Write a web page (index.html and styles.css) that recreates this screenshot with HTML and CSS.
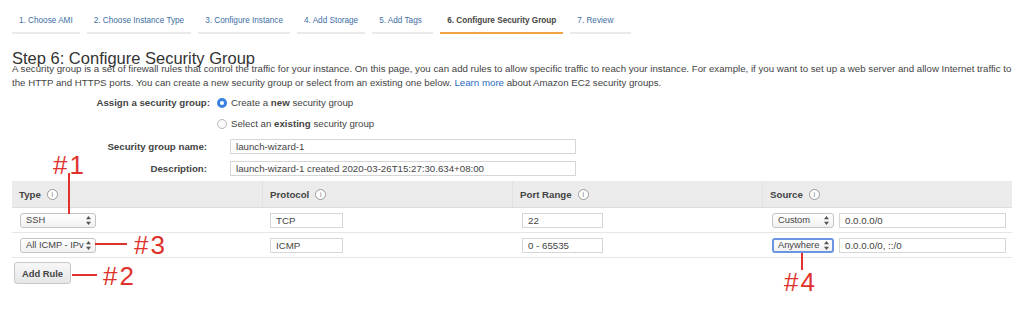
FILE: index.html
```html
<!DOCTYPE html>
<html>
<head>
  <meta charset="UTF-8" />
  <title>Step 6: Configure Security Group</title>
  <link rel="stylesheet" href="styles.css">
</head>
<body>
  <div class="page">
    <!-- wizard steps -->
    <div class="tabs">
      <div class="tab">1. Choose AMI</div>
      <div class="tab">2. Choose Instance Type</div>
      <div class="tab">3. Configure Instance</div>
      <div class="tab">4. Add Storage</div>
      <div class="tab">5. Add Tags</div>
      <div class="tab active">6. Configure Security Group</div>
      <div class="tab">7. Review</div>
    </div>

    <h1 class="title">Step 6: Configure Security Group</h1>
    <p class="intro">A security group is a set of firewall rules that control the traffic for your instance. On this page, you can add rules to allow specific traffic to reach your instance. For example, if you want to set up a web server and allow Internet traffic to the HTTP and HTTPS ports. You can create a new security group or select from an existing one below. <a href="#">Learn more</a> about Amazon EC2 security groups.</p>

    <div class="assign">
      <div class="assign-label">Assign a security group:</div>
      <div class="radio-line"><span class="radio checked"></span><span>Create a <b>new</b> security group</span></div>
      <div></div>
      <div class="radio-line"><span class="radio"></span><span>Select an <b>existing</b> security group</span></div>
    </div>

    <div class="fields">
      <label class="field-label">Security group name:</label>
      <div class="text-box">launch-wizard-1</div>
      <label class="field-label">Description:</label>
      <div class="text-box">launch-wizard-1 created 2020-03-26T15:27:30.634+08:00</div>
    </div>

    <div class="rules">
      <div class="rules-head">
        <div class="cell">Type <span class="info">i</span></div>
        <div class="cell">Protocol <span class="info">i</span></div>
        <div class="cell">Port Range <span class="info">i</span></div>
        <div class="cell">Source <span class="info">i</span></div>
      </div>
      <div class="rules-row">
        <div class="cell">
          <div class="select type-select"><span class="sel-text">SSH</span>
            <svg class="arrows" width="5" height="9" viewBox="0 0 5 9"><path d="M2.5 0 L5 3.3 L0 3.3 Z M2.5 9 L5 5.7 L0 5.7 Z" fill="#555"/></svg>
          </div>
        </div>
        <div class="cell"><div class="text-box proto">TCP</div></div>
        <div class="cell"><div class="text-box port">22</div></div>
        <div class="cell source">
          <div class="select source-select"><span class="sel-text">Custom</span>
            <svg class="arrows" width="5" height="9" viewBox="0 0 5 9"><path d="M2.5 0 L5 3.3 L0 3.3 Z M2.5 9 L5 5.7 L0 5.7 Z" fill="#555"/></svg>
          </div>
          <div class="text-box cidr">0.0.0.0/0</div>
        </div>
      </div>
      <div class="rules-row">
        <div class="cell">
          <div class="select type-select"><span class="sel-text">All ICMP - IPv</span>
            <svg class="arrows" width="5" height="9" viewBox="0 0 5 9"><path d="M2.5 0 L5 3.3 L0 3.3 Z M2.5 9 L5 5.7 L0 5.7 Z" fill="#555"/></svg>
          </div>
        </div>
        <div class="cell"><div class="text-box proto">ICMP</div></div>
        <div class="cell"><div class="text-box port">0 - 65535</div></div>
        <div class="cell source">
          <div class="select source-select focused"><span class="sel-text">Anywhere</span>
            <svg class="arrows" width="5" height="9" viewBox="0 0 5 9"><path d="M2.5 0 L5 3.3 L0 3.3 Z M2.5 9 L5 5.7 L0 5.7 Z" fill="#555"/></svg>
          </div>
          <div class="text-box cidr">0.0.0.0/0, ::/0</div>
        </div>
      </div>
    </div>

    <button class="add-rule">Add Rule</button>

    <!-- red callouts drawn over the screenshot -->
    <div class="mark mark-1">#1</div>
    <div class="line v line-1"></div>
    <div class="mark mark-3">#3</div>
    <div class="line h line-3"></div>
    <div class="mark mark-2">#2</div>
    <div class="line h line-2"></div>
    <div class="mark mark-4">#4</div>
    <div class="line v line-4"></div>
  </div>
</body>
</html>
```

FILE: styles.css
```css
body {
  margin: 0;
  background: #fff;
  font-family: "Liberation Sans", Arial, sans-serif;
  color: #444;
}
.page {
  position: relative;
  padding: 0 12px;
  height: 315px;
  box-sizing: border-box;
}
.tabs {
  display: flex;
  gap: 7px;
  padding-top: 13px;
  font-size: 8.2px;
}
.tab {
  min-width: 61px;
  box-sizing: border-box;
  padding: 0 7px 3px 7px;
  line-height: 16px;
  color: #3d6ea3;
  border-bottom: 2px solid #eaeaea;
}
.tab.active {
  color: #444;
  font-weight: bold;
  border-bottom-color: #f2a546;
}
.title {
  margin: 18px 0 0 0;
  font-size: 16.5px;
  font-weight: normal;
  line-height: 13px;
  color: #333;
}
.intro {
  margin: -3px 0 0 0;
  font-size: 9.7px;
  line-height: 14px;
  color: #444;
}
.intro a {
  color: #2a6cc2;
  text-decoration: none;
}
.assign {
  display: grid;
  grid-template-columns: 198px auto;
  column-gap: 7px;
  margin-top: 2px;
  font-size: 9.7px;
  line-height: 21px;
  justify-content: start;
}
.assign-label {
  font-weight: bold;
  text-align: right;
}
.radio-line {
  display: flex;
  align-items: center;
}
.radio {
  width: 8px;
  height: 8px;
  border: 1px solid #b8b8b8;
  border-radius: 50%;
  margin-right: 4px;
  background: #fafafa;
}
.radio.checked {
  background: #fff;
  border: 3px solid #3b82e0;
  width: 4px;
  height: 4px;
}
.fields {
  display: grid;
  grid-template-columns: 195px 346px;
  column-gap: 23px;
  row-gap: 7px;
  margin-top: 5px;
  font-size: 9.7px;
  align-items: center;
}
.field-label {
  font-weight: bold;
  text-align: right;
}
.text-box {
  height: 15px;
  box-sizing: border-box;
  border: 1px solid #d6d6d6;
  padding: 0 5px;
  font-size: 9.7px;
  line-height: 13px;
  color: #444;
  background: #fff;
  white-space: nowrap;
}
.rules {
  margin-top: 5px;
  font-size: 9.7px;
}
.rules-head,
.rules-row {
  display: grid;
  grid-template-columns: repeat(4, 250px);
}
.rules-head {
  height: 27px;
  background: #ebebeb;
  border-bottom: 1px solid #dcdcdc;
  box-sizing: border-box;
  font-weight: bold;
}
.rules-head .cell {
  display: flex;
  align-items: center;
  border-left: 1px solid #e2e2e2;
  padding-left: 7px;
}
.rules-head .cell:first-child {
  border-left: none;
}
.info {
  display: inline-block;
  width: 9px;
  height: 9px;
  margin-left: 6px;
  border: 1px solid #9a9a9a;
  border-radius: 50%;
  font-size: 7px;
  font-weight: normal;
  line-height: 9px;
  text-align: center;
  color: #777;
  background: #fff;
}
.rules-row {
  height: 25px;
  border-bottom: 1px solid #e6e6e6;
  box-sizing: border-box;
}
.rules-row .cell {
  display: flex;
  align-items: center;
  padding-left: 8px;
}
.rules-row .cell:nth-child(3),
.rules-row .cell:nth-child(4) {
  padding-left: 10px;
}
.select {
  display: flex;
  align-items: center;
  height: 15px;
  box-sizing: border-box;
  padding: 0 4px 0 5px;
  border: 1px solid #c4c4c4;
  border-radius: 3px;
  background: linear-gradient(#fff, #f1f1f1);
  font-size: 9.3px;
  color: #444;
}
.sel-text {
  flex: 1;
  overflow: hidden;
  white-space: nowrap;
  line-height: 13px;
}
.arrows {
  flex: none;
  margin-left: 2px;
}
.type-select {
  width: 76px;
}
.source-select {
  width: 62px;
}
.source-select.focused {
  border: 2px solid #6b95e3;
  padding: 0 3px 0 4px;
}
.proto {
  width: 73px;
}
.port {
  width: 81px;
}
.cidr {
  width: 167px;
  margin-left: 5px;
}
.add-rule {
  display: block;
  margin-top: 4px;
  margin-left: 2px;
  width: 57px;
  height: 22px;
  padding: 0;
  border: 1px solid #c9c9c9;
  border-radius: 3px;
  background: linear-gradient(#f7f7f7, #e6e6e6);
  font-family: "Liberation Sans", Arial, sans-serif;
  font-size: 9.4px;
  font-weight: bold;
  color: #444;
}
.mark {
  position: absolute;
  font-family: "Liberation Sans", Arial, sans-serif;
  font-size: 26px;
  line-height: 26px;
  letter-spacing: 2px;
  color: #e0322c;
}
.line {
  position: absolute;
  background: #e0322c;
}
.line.v {
  width: 2px;
}
.line.h {
  height: 2px;
}
.mark-1 { left: 53px; top: 152px; }
.line-1 { left: 68px; top: 173px; height: 41px; }
.mark-3 { left: 134px; top: 232px; }
.line-3 { left: 95px; top: 243px; width: 32px; }
.mark-2 { left: 103px; top: 263px; }
.line-2 { left: 72px; top: 274px; width: 25px; }
.mark-4 { left: 784px; top: 269px; }
.line-4 { left: 801px; top: 253px; height: 17px; }
```
